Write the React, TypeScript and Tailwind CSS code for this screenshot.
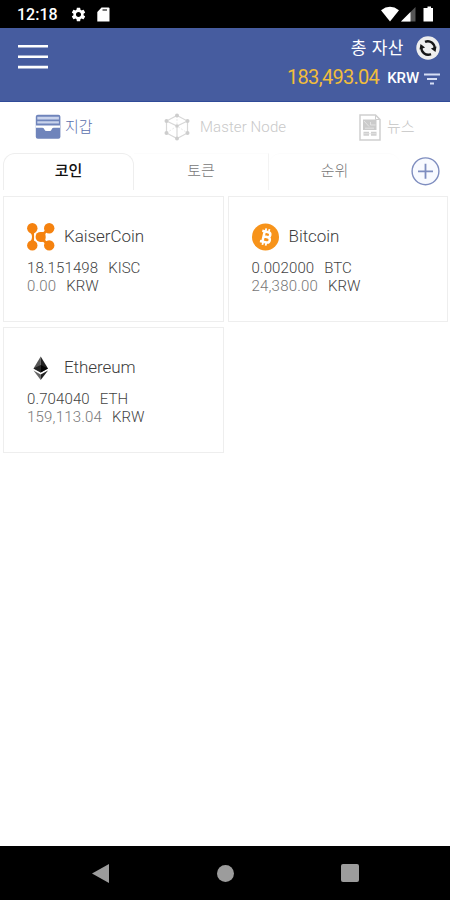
import { MdSettings } from 'react-icons/md';

const COINS = [
  { name: 'KaiserCoin', amount: '18.151498', symbol: 'KISC', krw: '0.00', icon: <KaiserIcon /> },
  { name: 'Bitcoin', amount: '0.002000', symbol: 'BTC', krw: '24,380.00', icon: <BitcoinIcon /> },
  { name: 'Ethereum', amount: '0.704040', symbol: 'ETH', krw: '159,113.04', icon: <EthereumIcon /> },
];

function KaiserIcon() {
  return (
    <svg width="28" height="28" viewBox="0 0 28 28" fill="#f5820f">
      <path d="M3.5 9.5 Q6.5 14 3.5 18.5 L7 18 Q7.2 14 7 10Z" />
      <path d="M16 11 L20 7.5 M16 17 L20 20.5" stroke="#f5820f" strokeWidth="2.4" />
      <circle cx="5.3" cy="5.3" r="5.2" />
      <circle cx="22.2" cy="5.3" r="5.2" />
      <circle cx="5.3" cy="22.4" r="5.2" />
      <circle cx="22.2" cy="22.4" r="5.2" />
      <circle cx="13.6" cy="13.9" r="5" />
      <path d="M14 9h4.3v9.8H14z" />
    </svg>
  );
}

function BitcoinIcon() {
  return (
    <svg width="28" height="28" viewBox="0 0 28 28">
      <circle cx="13.5" cy="14" r="13.5" fill="#f7931a" />
      <g transform="rotate(13 14 14)" fill="none" stroke="#fff" strokeWidth="2.5">
        <path d="M9 8.8h6.2a2.5 2.5 0 0 1 0 5H11.5M11.5 13.8h4.2a2.7 2.7 0 0 1 0 5.4H9M11.5 8.8v10.4" />
        <path d="M12.3 5.5v3M15.6 5.5v3M12.3 19.5v3M15.6 19.5v3" strokeWidth="1.8" />
      </g>
    </svg>
  );
}

function EthereumIcon() {
  return (
    <svg width="28" height="28" viewBox="0 0 28 28">
      <path d="M13.7 2.5 L6.5 14.5 L13.7 18.5Z" fill="#555" />
      <path d="M13.7 2.5 L21 14.5 L13.7 18.5Z" fill="#222" />
      <path d="M13.7 11 L6.5 14.5 L13.7 18.5Z" fill="#222" />
      <path d="M13.7 11 L21 14.5 L13.7 18.5Z" fill="#050505" />
      <path d="M6.5 16.4 L13.7 20.4 V26Z" fill="#666" />
      <path d="M21 16.4 L13.7 20.4 V26Z" fill="#222" />
    </svg>
  );
}

function WalletIcon() {
  return (
    <svg width="26" height="26" viewBox="0 0 26 26">
      <rect x="0.8" y="0.8" width="24.6" height="24" rx="2" fill="#6f84bb" />
      <path d="M2.3 2.8h21.6v2.6H2.3zM2.3 7.2h21.6v2.4H2.3z" fill="#c9d3ec" />
      <path d="M1 11.5h24v2.2h-6.4q-1.6 0-2 1.7t-2.4 1.5h-2.4q-2 0-2.4-1.5t-2-1.7H1z" fill="#fff" />
    </svg>
  );
}

function NodeIcon() {
  return (
    <svg width="26" height="28" viewBox="0 0 26 28" fill="none" stroke="#d8d8d8" strokeWidth="1.2">
      <path d="M13 2.5 L23.5 8 V20 L13 25.5 L2.5 20 V8Z M2.5 8 L13 13 L23.5 8 M13 13V25.5" />
      <path d="M13 2.5V13M2.5 20 L13 13 L23.5 20" strokeWidth="0.6" strokeDasharray="2 1.5" />
      <g fill="#cdcdcd" stroke="none">
        <circle cx="13" cy="2.5" r="2" />
        <circle cx="23.5" cy="8" r="2" />
        <circle cx="23.5" cy="20" r="2" />
        <circle cx="13" cy="25.5" r="2" />
        <circle cx="2.5" cy="20" r="2" />
        <circle cx="2.5" cy="8" r="2" />
        <circle cx="13" cy="13" r="1.7" />
      </g>
    </svg>
  );
}

function NewsIcon() {
  return (
    <svg width="22" height="27" viewBox="0 0 22 27" fill="none" stroke="#cfcfcf">
      <path d="M1 1h15.5l4.5 4.5V26H1z" strokeWidth="1.5" />
      <path d="M16.5 1v4.5H21" />
      <rect x="4" y="5.5" width="13.5" height="10.5" fill="#cbcbcb" stroke="none" />
      <path d="M5 7l5 5.5M11.5 8v3h5M6 14.2h9" stroke="#e4e4e4" />
      <path d="M4.5 19.7h5.5M12 19.7h5.5" strokeWidth="4" />
      <path d="M4 19.7h14" stroke="#e4e4e4" strokeWidth="0.8" />
    </svg>
  );
}

function RefreshIcon() {
  return (
    <svg width="24" height="24" viewBox="0 0 24 24">
      <circle cx="12" cy="12" r="11.7" fill="#eee" />
      <g fill="none" stroke="#161616" strokeWidth="2.3">
        <path d="M9 5.9a6.8 6.8 0 0 1 9.6 6.8" />
        <path d="M15 18.1a6.8 6.8 0 0 1-9.6-6.8" />
      </g>
      <path d="M20.5 10.6l-1 5.4-4.6-3.4zM3.5 13.4l1-5.4 4.6 3.4z" fill="#161616" />
    </svg>
  );
}

function StatusBar() {
  return (
    <div className="h-7 shrink-0 bg-black text-white flex items-center justify-between pl-[17px] pr-4 pt-px">
      <div className="flex items-center">
        <span className="w-[53px] text-base leading-none font-medium">12:18</span>
        <MdSettings size={17} />
        <svg className="ml-[10px]" width="13" height="15" viewBox="0 0 13 15" fill="#fff">
          <path d="M4.5 0.5H11.5Q12.5 .5 12.5 1.5V14.5H.3V5z" />
          <path d="M5.5 3h4.5" stroke="#555" strokeWidth="1.6" />
        </svg>
      </div>
      <svg width="53" height="17" viewBox="0 0 53 17" fill="#fff">
        <path d="M0 4.2Q9-2.6 18 4.2L9 15.5z" />
        <path d="M34.5 1v14.5H20z" fill="#555" />
        <path d="M29.5 6v9.5H20z" />
        <path d="M44.5 2h2V.5h3.5V2h2v13.5H42.5V2z" />
      </svg>
    </div>
  );
}

function Header() {
  return (
    <header className="h-[74px] shrink-0 bg-[#465c9f] border-b border-[#304b98] text-white flex justify-between pl-[18px] pr-[10px]">
      <svg className="mt-4" width="30" height="26" viewBox="0 0 30 26" stroke="#fff" strokeWidth="2.6">
        <path d="M0 2.3h30M0 12.7h30M0 23.1h30" />
      </svg>
      <div className="flex flex-col items-end pt-2">
        <div className="flex items-center h-6 gap-3">
          <span className="text-[17px] leading-6 tracking-[0.5px]">총 자산</span>
          <RefreshIcon />
        </div>
        <div className="flex items-center h-[34px]">
          <span className="text-[20px] tracking-[-0.7px] text-[#f0bd3c]">183,493.04</span>
          <span className="ml-2 pt-[3px] text-[15px] tracking-[-0.1px] font-medium">KRW</span>
          <svg className="ml-[5px] mt-1" width="16" height="12" viewBox="0 0 16 12" stroke="#d5def5" strokeWidth="2">
            <path d="M0 1.5h16M3 6h10M6 10.5h4" />
          </svg>
        </div>
      </div>
    </header>
  );
}

function MainTabs() {
  return (
    <nav className="h-[51px] shrink-0 flex items-center pl-[35px] pb-px text-[15px] font-light">
      <div className="flex items-center w-[129px] gap-1 text-[#596fae]">
        <WalletIcon />
        지갑
      </div>
      <div className="flex items-center w-[195px] gap-[10px] text-[#c9c9c9]">
        <NodeIcon />
        <span className="tracking-[0.1px]">Master Node</span>
      </div>
      <div className="flex items-center gap-[6px] text-[#c4c4c4]">
        <NewsIcon />
        뉴스
      </div>
    </nav>
  );
}

function SubTabs() {
  return (
    <div className="h-[37px] shrink-0 flex text-[15px] leading-[34px] text-center">
      <div className="ml-[3px] w-[131px] border border-b-0 border-[#eeeeee] rounded-t-[12px] font-medium text-[#111]">코인</div>
      <div className="w-[135px] border-t border-r border-t-[#fcfcfc] border-r-[#f3f3f3] font-light text-[#777]">토큰</div>
      <div className="w-[131px] border-t border-[#fcfcfc] rounded-t-[12px] font-light text-[#777]">순위</div>
      <svg className="ml-[11px] mt-[4px]" width="29" height="29" viewBox="0 0 29 29" fill="none" stroke="#7e8dbf">
        <circle cx="14.5" cy="14.3" r="13.4" strokeWidth="1.4" fill="#f8faff" />
        <path d="M14.5 6.8v15M7 14.3h15" strokeWidth="1.8" />
      </svg>
    </div>
  );
}

function CoinCard({ coin }: { coin: (typeof COINS)[number] }) {
  return (
    <div className="h-[126px] border border-[#eeeeee] pl-[23px] pt-[26px] font-light">
      <div className="flex items-center h-7 gap-[9px]">
        {coin.icon}
        <span className="text-[17px] tracking-[-0.05px] text-[#3d3d3d]">{coin.name}</span>
      </div>
      <div className="mt-[8px] text-[15px] leading-[18px] text-[#444]">
        <div className="flex gap-[10px]">
          <span className="tracking-[0.12px]">{coin.amount}</span>
          <span>{coin.symbol}</span>
        </div>
        <div className="flex gap-[10px]">
          <span className="tracking-[0.2px] text-[#777]">{coin.krw}</span>
          <span>KRW</span>
        </div>
      </div>
    </div>
  );
}

function NavBar() {
  return (
    <div className="h-[54px] shrink-0 bg-black flex items-center justify-between pl-[92px] pr-[91px]">
      <svg width="17" height="19" viewBox="0 0 17 19" fill="#9c9c9c">
        <path d="M0 9.5 17 0v19z" />
      </svg>
      <div className="size-[17px] rounded-full bg-[#9c9c9c]" />
      <div className="size-[18px] rounded-xs bg-[#9c9c9c]" />
    </div>
  );
}

export default function App() {
  return (
    <div className="w-[450px] h-[900px] bg-white flex flex-col overflow-hidden font-[Roboto,'Noto_Sans_CJK_KR',sans-serif]">
      <StatusBar />
      <Header />
      <MainTabs />
      <SubTabs />
      <main className="flex-1 pt-[6px] pl-[3px] pr-[2px]">
        <div className="grid grid-cols-2 gap-x-[4px] gap-y-[5px]">
          {COINS.map((coin) => (
            <CoinCard key={coin.name} coin={coin} />
          ))}
        </div>
      </main>
      <NavBar />
    </div>
  );
}
